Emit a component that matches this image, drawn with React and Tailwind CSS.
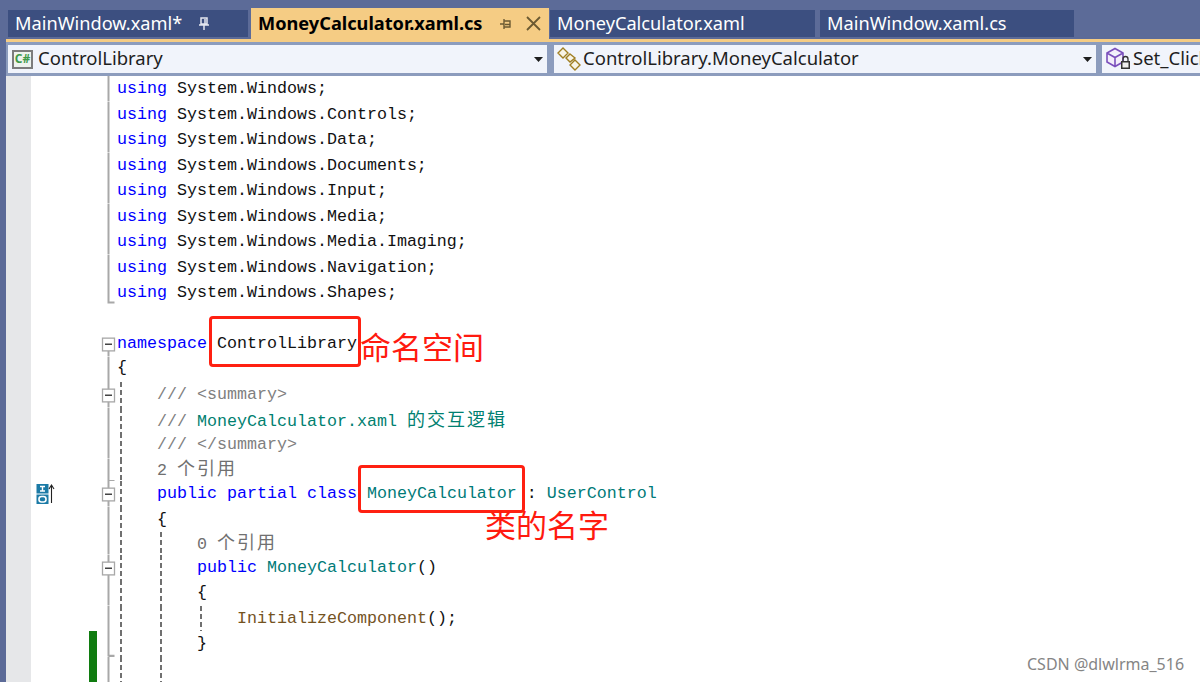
import React from "react";

const KW = "text-[#0000ff]";
const TYPE = "text-[#007a78]";
const DOC = "text-[#808080]";
const NOTE = "text-[#008070]";
const FN = "text-[#74531f]";
const LENS = "text-[#707070]";

const Cjk = ({ children }) => (
  <span className="font-['Noto_Sans_CJK_SC',sans-serif] text-[18px] leading-none tracking-[2px]">{children}</span>
);

// fold: line | end | tick | start | box | none
const usings = [
  "System.Windows;",
  "System.Windows.Controls;",
  "System.Windows.Data;",
  "System.Windows.Documents;",
  "System.Windows.Input;",
  "System.Windows.Media;",
  "System.Windows.Media.Imaging;",
  "System.Windows.Navigation;",
  "System.Windows.Shapes;",
];

const rows = [
  ...usings.map((u, i) => ({
    fold: i === usings.length - 1 ? "end" : "line",
    code: (
      <>
        <span className={KW}>using</span> {u}
      </>
    ),
  })),
  { fold: "none" },
  {
    fold: "start",
    code: (
      <>
        <span className={KW}>namespace</span> ControlLibrary
      </>
    ),
  },
  { fold: "line", code: "{", raised: true },
  {
    fold: "box",
    guides: 1,
    code: <span className={DOC}>/// &lt;summary&gt;</span>,
  },
  {
    fold: "line",
    guides: 1,
    raised: true,
    code: (
      <>
        <span className={DOC}>/// </span>
        <span className={NOTE}>
          MoneyCalculator.xaml <Cjk>的交互逻辑</Cjk>
        </span>
      </>
    ),
  },
  {
    fold: "line",
    guides: 1,
    raised: true,
    code: <span className={DOC}>/// &lt;/summary&gt;</span>,
  },
  {
    fold: "tick",
    guides: 1,
    short: true,
    raised: true,
    code: (
      <span className={LENS}>
        2 <Cjk>个引用</Cjk>
      </span>
    ),
  },
  {
    fold: "box",
    guides: 1,
    inherit: true,
    code: (
      <>
        <span className={KW}>public partial class</span> <span className={TYPE}>MoneyCalculator</span> :{" "}
        <span className={TYPE}>UserControl</span>
      </>
    ),
  },
  { fold: "line", guides: 1, code: "{" },
  {
    fold: "line",
    guides: 2,
    short: true,
    raised: true,
    code: (
      <span className={LENS}>
        0 <Cjk>个引用</Cjk>
      </span>
    ),
  },
  {
    fold: "box",
    guides: 2,
    code: (
      <>
        <span className={KW}>public</span> <span className={TYPE}>MoneyCalculator</span>()
      </>
    ),
  },
  { fold: "line", guides: 2, code: "{" },
  {
    fold: "line",
    guides: 3,
    code: (
      <>
        <span className={FN}>InitializeComponent</span>();
      </>
    ),
  },
  { fold: "tick", guides: 2, changed: true, code: "}" },
  { fold: "line", guides: 2, changed: true },
];

const FoldMark = ({ kind }) => {
  if (kind === "none") return null;
  const boxed = kind === "box" || kind === "start";
  return (
    <svg className="w-full h-full" viewBox="0 0 20 25" preserveAspectRatio="none">
      {kind === "line" && <path d="M11.5 0V25" stroke="#a8a8a8" strokeWidth="2" />}
      {kind === "end" && <path d="M11.5 0V22H17.5" stroke="#a8a8a8" strokeWidth="2" fill="none" />}
      {kind === "tick" && <path d="M11.5 0V25M11.5 24.4H17.5" stroke="#a8a8a8" strokeWidth="2" fill="none" />}
      {boxed && (
        <>
          <path d={kind === "box" ? "M11.5 0V25" : "M11.5 19V25"} stroke="#a8a8a8" strokeWidth="2" />
          <rect x="5.5" y="7" width="12" height="12.5" fill="#fff" stroke="#a8a8a8" strokeWidth="1.3" />
          <path d="M8 13H15" stroke="#444" strokeWidth="1.5" />
        </>
      )}
    </svg>
  );
};

const Guide = () => (
  <span className="block w-[40px] h-full pl-[3px] shrink-0">
    <span className="block w-[2px] h-full bg-[repeating-linear-gradient(to_bottom,#707070_0,#707070_5px,transparent_5px,transparent_8px)]" />
  </span>
);

const ClassMark = () => (
  <svg width="24" height="22" viewBox="0 0 24 22">
    <rect x="0.5" y="1" width="12" height="9.5" fill="#1b7aa6" />
    <rect x="0.5" y="11.5" width="12" height="9.5" fill="#1b7aa6" />
    <rect x="3" y="13.5" width="7" height="5.5" rx="2.5" fill="none" stroke="#fff" strokeWidth="1.6" />
    <path d="M4 3.5H9M4 8H9M6.5 3.5V8" stroke="#fff" strokeWidth="1.4" />
    <path d="M15.5 20V2.5M13 6L15.5 2L18 6" fill="none" stroke="#222" strokeWidth="1.1" />
  </svg>
);

const Caret = () => (
  <svg width="9" height="5" viewBox="0 0 9 5" className="shrink-0">
    <path d="M0 0H9L4.5 5Z" fill="#1e1e1e" />
  </svg>
);

const Tab = ({ className, children }) => (
  <div className={`flex items-center shrink-0 text-white ${className}`}>{children}</div>
);

const Dropdown = ({ className, icon, label, caret = true }) => (
  <div className={`flex items-center h-[28px] bg-[#f1f4fb] shrink-0 overflow-hidden ${className}`}>
    {icon}
    <span className="text-[18.5px] pb-[2px] text-[#1e1e1e] whitespace-nowrap">{label}</span>
    {caret && (
      <span className="ml-auto pr-[4px] flex">
        <Caret />
      </span>
    )}
  </div>
);

export default function App() {
  return (
    <div className="relative flex w-[1200px] h-[682px] overflow-hidden bg-[#5c6b98] font-['Noto_Sans',sans-serif]">
      <div className="w-[6px] shrink-0" />
      <div className="flex flex-col flex-1 min-w-0">
        {/* tab well */}
        <div className="flex h-[39px] shrink-0 text-[18.2px]">
          <Tab className="mt-[10px] ml-[2px] h-[27px] w-[240px] bg-[#3c4f80] pl-[7px]">
            <span>MainWindow.xaml*</span>
            <svg width="12" height="14" viewBox="0 0 12 14" className="ml-[16px]">
              <path d="M3 1H9V7H3ZM1 8H11M6 8V13M7 2V7" stroke="#e4e7f0" strokeWidth="1.5" fill="none" />
            </svg>
          </Tab>
          <div className="flex items-center shrink-0 mt-[8px] ml-[3px] h-[31px] w-[298px] bg-[#f5cc84] pl-[7px] text-black font-bold">
            <span>MoneyCalculator.xaml.cs</span>
            <svg width="13" height="12" viewBox="0 0 13 12" className="ml-[16px]">
              <path d="M1 6H5M5 1V11M5 3H11V9H5M6 6.5H11" stroke="#6b5a32" strokeWidth="1.4" fill="none" />
            </svg>
            <svg width="15" height="15" viewBox="0 0 15 15" className="ml-[14px]">
              <path d="M1 1L14 14M14 1L1 14" stroke="#6b5a32" strokeWidth="1.8" />
            </svg>
          </div>
          <Tab className="mt-[10px] ml-[1px] h-[27px] w-[265px] bg-[#3c4f80] pl-[7px]">MoneyCalculator.xaml</Tab>
          <Tab className="mt-[10px] ml-[5px] h-[27px] w-[254px] bg-[#3c4f80] pl-[7px]">MainWindow.xaml.cs</Tab>
        </div>
        <div className="h-[3px] shrink-0 bg-[#f5cc84]" />

        {/* navigation bar */}
        <div className="flex items-center h-[34px] shrink-0 bg-[#8c9cbd] pl-[2px]">
          <Dropdown
            className="w-[539px] pl-[4px]"
            icon={
              <span className="flex items-center justify-center w-[21px] h-[19px] mr-[5px] border-2 border-[#7c7c7c] bg-[#eef3ee] text-[12px] leading-none font-bold text-[#3f9a4a]">
                C#
              </span>
            }
            label="ControlLibrary"
          />
          <Dropdown
            className="w-[542px] ml-[7px] pl-[3px]"
            icon={
              <svg width="25" height="24" viewBox="0 0 25 24" className="mr-[1px]">
                <path d="M6 1L11 6L6 11L1 6ZM13 7L18 11L13 15L9 11ZM18 13L23 18L18 23L13 18Z" fill="#f8f4e6" stroke="#a07f22" strokeWidth="1.4" />
              </svg>
            }
            label="ControlLibrary.MoneyCalculator"
          />
          <Dropdown
            className="w-[98px] ml-[6px] pl-[3px]"
            caret={false}
            icon={
              <svg width="27" height="24" viewBox="0 0 27 24" className="mr-[1px] shrink-0">
                <path d="M10 1.5L18 6V15L10 19.5L2 15V6ZM2 6L10 10.5L18 6M10 10.5V19.5" fill="#f3eefa" stroke="#7a4fbc" strokeWidth="1.6" />
                <rect x="16" y="14" width="9" height="8" fill="#333" />
                <path d="M18 14V12A2.5 2.5 0 0 1 23 12V14" fill="none" stroke="#333" strokeWidth="1.3" />
                <rect x="17.5" y="15.5" width="6" height="5" fill="#eee" />
              </svg>
            }
            label="Set_Click"
          />
        </div>

        {/* editor */}
        <div className="flex-1 min-h-0 flex flex-col bg-white font-['Liberation_Mono',monospace] text-[16.67px] text-[#111]">
          {rows.map((row, i) => (
            <div key={i} className={`flex shrink-0 ${row.short ? "h-[22.5px]" : "h-[25.5px]"}`}>
              <div className="w-[25px] shrink-0 bg-[#e6e7e9]" />
              <div className="w-[58px] shrink-0 pl-[5px] flex items-center">{row.inherit && <ClassMark />}</div>
              <div className={`w-[8px] shrink-0 ${row.changed ? "bg-[#107c10]" : ""}`} />
              <div className="w-[20px] shrink-0">
                <FoldMark kind={row.fold} />
              </div>
              <div className="flex items-center h-full whitespace-pre leading-none">
                {Array.from({ length: row.guides || 0 }).map((_, g) => (
                  <Guide key={g} />
                ))}
                <span className={row.raised ? "pb-[1px]" : "pt-[2px]"}>{row.code}</span>
              </div>
            </div>
          ))}
        </div>
      </div>

      {/* annotations drawn on top of the capture */}
      <div className="absolute left-[209px] top-[316px] w-[152px] h-[51px] border-[3px] border-[#ff2011] rounded-[4px]" />
      <div className="absolute left-[358px] top-[465px] w-[167px] h-[48px] border-[3px] border-[#ff2011] rounded-[4px]" />
      <div className="absolute left-[360px] top-[325px] text-[31px] leading-[42px] text-[#ff1a0f] font-['Noto_Sans_CJK_SC',sans-serif]">命名空间</div>
      <div className="absolute left-[485px] top-[503px] text-[31px] leading-[42px] text-[#ff1a0f] font-['Noto_Sans_CJK_SC',sans-serif]">类的名字</div>
      <div className="absolute left-[1027px] top-[654px] text-[16px] leading-[20px] text-[#858585]">CSDN @dlwlrma_516</div>
    </div>
  );
}
